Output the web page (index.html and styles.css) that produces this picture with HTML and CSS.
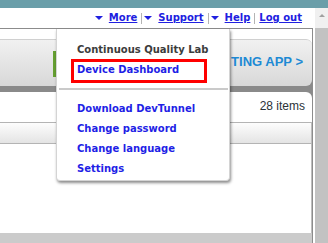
FILE: index.html
```html
<!DOCTYPE html>
<html lang="en">
<head>
  <meta charset="UTF-8">
  <title>Device Dashboard</title>
  <link rel="stylesheet" href="styles.css">
</head>
<body>
  <div class="topbar"></div>
  <div class="frame">
    <div class="main">
      <div class="userbar">
        <span class="caret"></span><a href="#">More</a>
        <span class="sep"></span>
        <span class="caret"></span><a href="#">Support</a>
        <span class="sep"></span>
        <span class="caret"></span><a href="#">Help</a>
        <span class="sep last"></span>
        <a href="#">Log out</a>
      </div>

      <div class="workspace">
        <div class="stage">
          <div class="band">
            <a href="#" class="create-btn">TING APP &gt;</a>
          </div>
          <div class="panel">
            <div class="count">28 items</div>
            <div class="table-head"></div>
            <div class="table-body"></div>
          </div>
        </div>
        <div class="footer-band"></div>
      </div>

      <div class="dropdown">
        <div class="dropdown-title">Continuous Quality Lab</div>
        <a href="#" class="dropdown-item highlight">Device Dashboard</a>
        <div class="dropdown-sep"></div>
        <ul class="dropdown-list">
          <li><a href="#" class="dropdown-item">Download DevTunnel</a></li>
          <li><a href="#" class="dropdown-item">Change password</a></li>
          <li><a href="#" class="dropdown-item">Change language</a></li>
          <li><a href="#" class="dropdown-item">Settings</a></li>
        </ul>
      </div>
    </div>
    <div class="scrollbar">
      <div class="scroll-up"></div>
    </div>
  </div>
</body>
</html>
```

FILE: styles.css
```css
* {
  margin: 0;
  padding: 0;
  box-sizing: border-box;
}
body {
  font-family: "DejaVu Sans", Verdana, sans-serif;
  font-size: 10px;
  background: #fff;
  width: 328px;
  height: 243px;
  overflow: hidden;
  display: flex;
  flex-direction: column;
}
.topbar {
  height: 8px;
  background: #6a9ea9;
}
.frame {
  flex: 1;
  display: flex;
}
.main {
  flex: 1;
  position: relative;
  display: flex;
  flex-direction: column;
}
.scrollbar {
  width: 13px;
  background: #c2c2c2;
}
.scroll-up {
  height: 20px;
  background: #f0f0f0;
  display: flex;
  justify-content: center;
  padding-top: 6px;
}
.scroll-up::before {
  content: "";
  width: 0;
  height: 0;
  border-left: 3px solid transparent;
  border-right: 3px solid transparent;
  border-bottom: 3px solid #a0a0a0;
}

/* user links */
.userbar {
  height: 20px;
  display: flex;
  justify-content: flex-end;
  align-items: center;
  padding-right: 13px;
}
.userbar a {
  color: #2020e0;
  font-weight: bold;
  line-height: 12px;
}
.caret {
  width: 0;
  height: 0;
  border-left: 4px solid transparent;
  border-right: 4px solid transparent;
  border-top: 4px solid #2020e0;
  margin-right: 6px;
}
.sep {
  width: 1px;
  height: 11px;
  background: #b4b4b4;
  margin: 0 2px 0 4px;
}
.sep.last {
  margin-right: 4px;
}

/* workspace */
.workspace {
  flex: 1;
  margin-right: 2px;
  border-top: 1px solid #8c8c8c;
  border-right: 1px solid #8c8c8c;
  padding-top: 10px;
  display: flex;
  flex-direction: column;
}
.stage {
  flex: 1;
  display: flex;
  flex-direction: column;
  background: linear-gradient(#fff 20px, #8a8a8a 20px);
}
.band {
  height: 47px;
  border-top: 1px solid #d0d0d0;
  background: linear-gradient(#f1f1f1, #d8d8d8);
  border-radius: 0 6px 6px 0;
  display: flex;
  padding: 11px 9px 0 53px;
}
.create-btn {
  flex: 1;
  height: 26px;
  border-left: 3px solid #66a032;
  display: flex;
  align-items: center;
  justify-content: flex-end;
  padding-bottom: 5px;
  font-family: "Liberation Sans", Arial, sans-serif;
  font-size: 13px;
  font-weight: bold;
  color: #1d8ad4;
  text-decoration: none;
}
.panel {
  flex: 1;
  margin-top: 6px;
  background: #fff;
  border-radius: 0 6px 0 0;
  display: flex;
  flex-direction: column;
}
.count {
  text-align: right;
  padding: 7px 7px 0 0;
  font-family: "Liberation Sans", Arial, sans-serif;
  font-size: 12px;
  line-height: 14px;
  color: #2b3338;
}
.table-head {
  margin-top: 9px;
  height: 22px;
  border-top: 1px solid #b4b4b4;
  border-bottom: 1px solid #b4b4b4;
  border-right: 1px solid #bdbdbd;
  background: linear-gradient(#fdfdfd, #e4e4e4);
}
.table-body {
  flex: 1;
  border-right: 1px solid #bdbdbd;
}
.footer-band {
  height: 10px;
  background: #cbcbcb;
}

/* dropdown menu */
.dropdown {
  position: absolute;
  left: 56px;
  top: 21px;
  width: 174px;
  height: 152px;
  background: #fff;
  border: 1px solid #d4d4d4;
  border-top: 0;
  border-radius: 0 0 4px 4px;
  box-shadow: 1px 2px 3px rgba(0, 0, 0, 0.45);
  padding-top: 15px;
}
.dropdown-title {
  padding-left: 20px;
  font-weight: bold;
  line-height: 12px;
  color: #3c3c3c;
}
.dropdown-item {
  display: block;
  font-weight: bold;
  color: #1f1fe6;
  text-decoration: none;
  line-height: 20px;
  padding-left: 20px;
}
.dropdown-item.highlight {
  width: 136px;
  margin: 3px 0 0 14px;
  border: 3px solid #ff0000;
  padding: 2px 3px 4px 3px;
  line-height: 12px;
}
.dropdown-sep {
  height: 2px;
  margin: 5px 1px 0 2px;
  background: #cacaca;
}
.dropdown-list {
  list-style: none;
  margin-top: 9px;
}
```
